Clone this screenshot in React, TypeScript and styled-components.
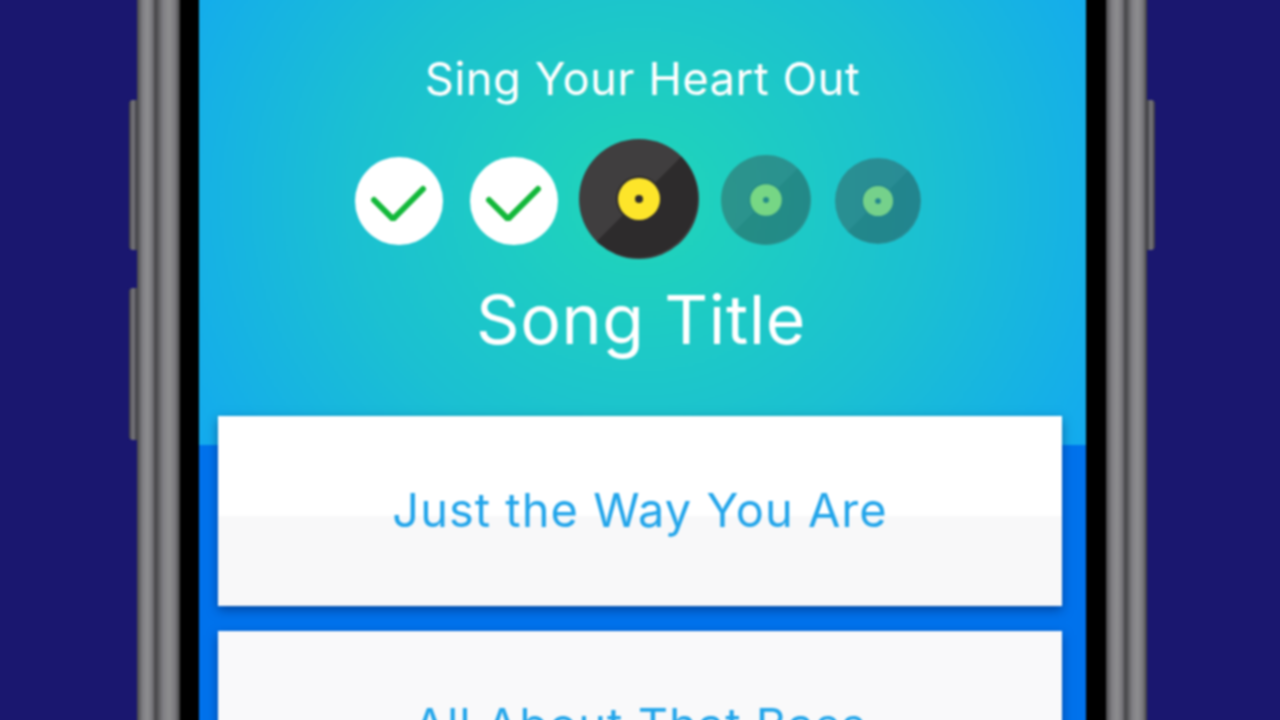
import { FC } from 'react';
import styled, { createGlobalStyle } from 'styled-components';

const GlobalStyle = createGlobalStyle`
  html, body {
    margin: 0;
    padding: 0;
    height: 100%;
    background: #1a176f;
  }
`;

const Page = styled.div`
  width: 1280px;
  height: 720px;
  overflow: hidden;
  background: #1a176f;
`;

/* the reference is an upscaled video frame, so everything is a bit soft. runs past the viewport so the blur has no edge */
const SoftLayer = styled.div`
  display: flex;
  box-sizing: border-box;
  height: 740px;
  margin-top: -10px;
  padding-left: 137px;
  font-family: 'Inter', 'Noto Sans', sans-serif;
  filter: blur(0.8px);
`;

const Phone = styled.div`
  position: relative;
  display: flex;
  width: 1010px;
  flex: none;
`;

const Band = styled.div<{ $width: number }>`
  flex: none;
  width: ${(p) => p.$width}px;
  background: linear-gradient(90deg, #48484a 0%, #807f84 30%, #8e8e90 55%, #78777c 80%, #3e3e40 100%);
`;

const Bezel = styled.div<{ $width: number }>`
  flex: none;
  width: ${(p) => p.$width}px;
  background: #000;
`;

const SideButton = styled.div<{ $side: 'left' | 'right'; $top: number; $height: number }>`
  position: absolute;
  top: ${(p) => p.$top}px;
  ${(p) => p.$side}: -8px;
  width: 8px;
  height: ${(p) => p.$height}px;
  border-radius: ${(p) => (p.$side === 'left' ? '4px 0 0 4px' : '0 4px 4px 0')};
  background: linear-gradient(90deg, #3c3c40, #7c7b82 50%, #3c3c40);
`;

const Screen = styled.div`
  flex: 1;
  display: flex;
  flex-direction: column;
  min-width: 0;
  background: #0072ec;
`;

const Hero = styled.div`
  flex: none;
  display: flex;
  flex-direction: column;
  align-items: center;
  height: 455px;
  box-sizing: border-box;
  padding-top: 62px;
  color: #fff;
  background: radial-gradient(ellipse 530px 480px at 441px 210px, #20d6b8 0%, #1bc0d2 55%, #13a9f0 100%);
`;

const Heading = styled.div`
  font-size: 45px;
  line-height: 54px;
  letter-spacing: 0.65px;
`;

const Progress = styled.div`
  display: flex;
  align-items: center;
  height: 122px;
  margin-top: 32px;
  padding-right: 10px;
`;

const StepSlot = styled.div<{ $size: number; $gap: number; $drop?: number }>`
  flex: none;
  width: ${(p) => p.$size}px;
  height: ${(p) => p.$size}px;
  margin-left: ${(p) => p.$gap}px;
  margin-top: ${(p) => p.$drop ?? 0}px;
`;

const DoneBadge = styled.div`
  display: flex;
  align-items: center;
  justify-content: center;
  width: 100%;
  height: 100%;
  border-radius: 50%;
  background: #fff;
`;

const DiscArt = styled.svg<{ $dim?: boolean }>`
  display: block;
  width: 100%;
  height: 100%;
  opacity: ${(p) => (p.$dim ? 0.4 : 1)};
`;

const SongTitle = styled.div`
  margin-top: 18px;
  margin-right: 3px;
  font-size: 68px;
  line-height: 82px;
  letter-spacing: 0.6px;
`;

const Answers = styled.div`
  display: flex;
  flex-direction: column;
  gap: 25px;
  margin-top: -29px;
  padding: 0 24px 0 19px;
`;

const AnswerCard = styled.div<{ $split?: boolean }>`
  flex: none;
  display: flex;
  align-items: center;
  justify-content: center;
  box-sizing: border-box;
  height: 190px;
  padding-bottom: 3px;
  font-size: 47px;
  letter-spacing: 1px;
  color: #22a5ea;
  background: ${(p) => (p.$split ? 'linear-gradient(180deg, #fff 0, #fff 100px, #f8f8f9 100px)' : '#f9f9fa')};
  box-shadow: 0 4px 10px rgba(0, 30, 90, 0.5);
`;

const Check = () => (
  <svg width='56' height='40' viewBox='0 0 56 40' fill='none'>
    <path d='M3 19L22 38L52 8' stroke='#12b83a' strokeWidth='6' strokeLinecap='round' strokeLinejoin='round' />
  </svg>
);

const Disc: FC<{ dim?: boolean }> = ({ dim }) => (
  <DiscArt $dim={dim} viewBox='0 0 120 120'>
    <circle cx='60' cy='60' r='60' fill='#403e3f' />
    <path d='M102.4 17.6A60 60 0 0 1 17.6 102.4Z' fill='#2d2b2c' />
    <circle cx='60' cy='60' r='23' fill='#2d2b2c' />
    <circle cx='60' cy='60' r='21' fill='#fde52a' />
    <circle cx='60' cy='60' r='4' fill='#2d2b2c' />
  </DiscArt>
);

export default function App() {
  return (
    <Page>
      <GlobalStyle />
      <SoftLayer>
        <Phone>
          <SideButton $side='left' $top={110} $height={150} />
          <SideButton $side='left' $top={298} $height={152} />
          <SideButton $side='right' $top={110} $height={150} />
          <Band $width={19} />
          <Band $width={24} />
          <Bezel $width={19} />
          <Screen>
            <Hero>
              <Heading>Sing Your Heart Out</Heading>
              <Progress>
                <StepSlot $size={88} $gap={0} $drop={3}>
                  <DoneBadge><Check /></DoneBadge>
                </StepSlot>
                <StepSlot $size={88} $gap={27} $drop={3}>
                  <DoneBadge><Check /></DoneBadge>
                </StepSlot>
                <StepSlot $size={120} $gap={21}>
                  <Disc />
                </StepSlot>
                <StepSlot $size={90} $gap={22} $drop={2}>
                  <Disc dim />
                </StepSlot>
                <StepSlot $size={86} $gap={24} $drop={3}>
                  <Disc dim />
                </StepSlot>
              </Progress>
              <SongTitle>Song Title</SongTitle>
            </Hero>
            <Answers>
              <AnswerCard $split>Just the Way You Are</AnswerCard>
              <AnswerCard>All About That Bass</AnswerCard>
            </Answers>
          </Screen>
          <Bezel $width={20} />
          <Band $width={20} />
          <Band $width={21} />
        </Phone>
      </SoftLayer>
    </Page>
  );
}
